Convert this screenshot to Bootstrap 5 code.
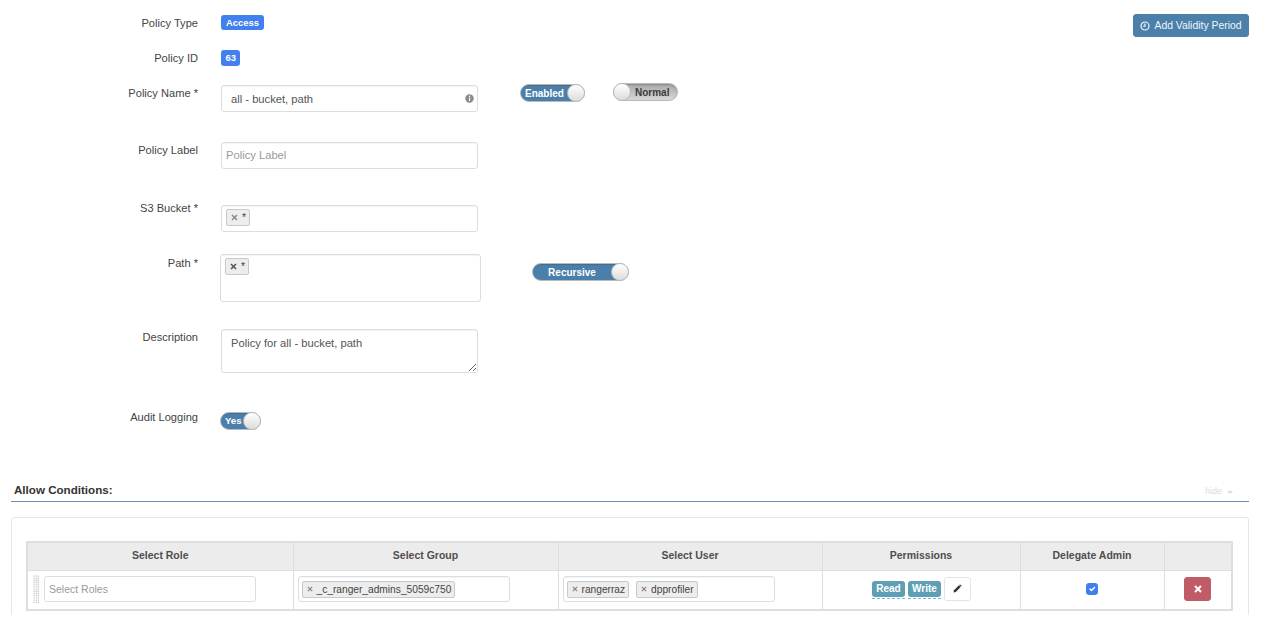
<!DOCTYPE html>
<html lang="en">
<head>
<meta charset="utf-8">
<title>Policy</title>
<link rel="stylesheet" href="https://cdn.jsdelivr.net/npm/bootstrap@5.3.0/dist/css/bootstrap.min.css">
<style>
html,body{background:#fff;margin:0}
body{font-family:"Liberation Sans",Arial,sans-serif;font-size:11px;color:#444;height:630px;overflow:hidden}
.page-wrap{height:615px;overflow:hidden;padding:15px 13px 0 11px}
.frm-row{display:flex;gap:23px;align-items:flex-start}
.frm-label{width:187px;flex:none;text-align:right;line-height:15px;color:#444;font-size:11.1px;padding-top:1px}
.r1{height:35px}
.r2{height:35px}
.r3{height:57px}
.r4{height:58px}
.r5{height:54px}
.r5 .tag-box{margin-top:5px}
.r6{height:75px}
.r6 .frm-label{padding-top:2px}
.r7{height:80px}
.r8{height:68px}
.pill-badge{background:#4180ee;color:#fff;font-size:9.4px;font-weight:700;line-height:15px;padding:0 5px;border-radius:3px;display:block}
.pill-id{line-height:16px;padding:0 4.5px}
.valid-btn{--bs-btn-padding-y:0;--bs-btn-padding-x:0;--bs-btn-font-size:10.4px;--bs-btn-bg:#4a80a9;--bs-btn-border-color:#4a80a9;--bs-btn-color:#f2f6fa;height:23px;width:116px;margin-left:auto;margin-top:-1px;padding-top:1px;border-radius:3px;display:flex;align-items:center;justify-content:center;gap:4px}
.txt-ctl,.tag-box,.note-ctl{width:257px;height:27px;border:1px solid #d9dee3;border-radius:3px;font-size:11.2px;color:#555;padding:0 9px;box-shadow:inset 0 1px 1px rgba(0,0,0,.04);background:#fff;line-height:normal}
.input-host{position:relative;flex:none}
.input-host svg{position:absolute;right:4px;top:9px}
.txt-ctl::placeholder,.cell-input::placeholder{color:#9a9a9a;opacity:1}
.label-ctl{padding:0 4px 2px}
.tag-box{display:flex;align-items:flex-start;gap:7px;padding:3px 3px 3px 4px}
.tag-path{width:261px;height:48px;margin-left:-1px}
.note-ctl{height:44px;padding:7px 9px 0;resize:both;flex:none}
.sel-tag{display:inline-flex;align-items:center;gap:4px;height:17px;padding:0 3px 0 4px;background:#ededed;border:1px solid #c9c9c9;border-radius:2px;color:#444;font-size:10.2px;line-height:15px;white-space:nowrap}
.sel-tag svg{flex:none}
.star-tag{padding:0 4px;width:24px;height:17px;font-size:10.5px}
.swt{display:flex;align-items:center;height:18px;border-radius:9px;border:1px solid #b9b9b9;background:#4a7fab;color:#fff;font-size:10px;font-weight:700;position:relative;flex:none;box-shadow:inset 0 1px 1px rgba(0,0,0,.15)}
.swt::after{content:"";position:absolute;top:-1px;right:-1px;width:18px;height:18px;border-radius:50%;background:linear-gradient(#fff,#dcdcdc);border:1px solid #bbb}
.swt-enabled{width:65px;padding-left:4px;margin-left:19px;margin-top:-1px}
.swt-normal{width:65px;padding-left:21px;margin-left:5px;margin-top:-2px;background:linear-gradient(#a8a8a8,#d8d8d8);color:#3c3c3c;box-shadow:inset 0 1px 2px rgba(0,0,0,.2)}
.swt-normal::after{right:auto;left:-1px}
.swt-rec{width:97px;justify-content:center;padding-right:17px;margin-left:28px;margin-top:9px}
.swt-yes{width:41px;padding-left:4px;margin-left:-1px;margin-top:3px;font-size:9.6px}
.sect-head{display:flex;align-items:flex-start;height:25px;border-bottom:1px solid #6b8fae;font-size:11.6px;color:#333;padding:4px 3px 0;font-weight:700}
.hide-link{margin-left:auto;margin-right:13px;font-size:9px;font-weight:400;color:#dcdcdc;padding-top:4px;display:flex;align-items:center;gap:5px}
.hide-caret{width:0;height:0;border-left:3px solid transparent;border-right:3px solid transparent;border-bottom:3px solid #dcdcdc}
.cond-card{margin-top:15px;border:1px solid #e6e6e6;border-radius:3px;padding:23px 16px 30px 14px;height:140px}
.cond-table{table-layout:fixed;width:1205px;margin:0;border:2px solid #dedede;border-collapse:collapse;--bs-table-border-color:#e6e6e6}
.cond-table th{height:28px;padding:0;background:#ececec;text-align:center;vertical-align:middle;font-size:10.5px;color:#4f4f4f;font-weight:700;box-shadow:none;border-bottom-width:0}
.cond-table td{height:38px;padding:0 0 2px;vertical-align:middle;text-align:center;box-shadow:none}
.cell-flex{display:flex;align-items:center;height:36px}
.drag-dots{width:6px;height:28px;margin-left:5px;margin-right:5px;background-image:radial-gradient(#cfcfcf .7px,transparent .8px);background-size:2.2px 2.2px;flex:none}
.cell-input{width:212px;height:26px;border:1px solid #d9dee3;border-radius:3px;font-size:10.5px;padding:0 4px;box-shadow:none;flex:none;color:#555}
.group-box{width:212px;height:26px;padding:4px 3px;gap:7px;margin-left:4px}
.perm-wrap{display:flex;align-items:center;justify-content:center;gap:3px;padding-left:1px}
.perm-tag{background:#5f9fb6;color:#fff;font-size:10px;font-weight:700;line-height:16px;height:16px;width:33px;text-align:center;border-radius:3px;position:relative}
.perm-tag::after{content:"";position:absolute;left:0;right:0;bottom:-2px;border-bottom:1px dashed #7fb3cf}
.pen-btn{--bs-btn-padding-x:0;--bs-btn-padding-y:0;--bs-btn-border-color:#e4e4e4;--bs-btn-bg:#fff;width:27px;height:24px;display:flex;align-items:center;justify-content:center;border-radius:3px}
.chk-box{width:12px;height:12px;margin:3px 0 0;border-radius:2px;float:none}
.chk-box:checked{background-color:#3f7ff0;border-color:#3f7ff0}
.del-btn{--bs-btn-padding-x:0;--bs-btn-padding-y:0;--bs-btn-bg:#bf5c65;--bs-btn-border-color:#bf5c65;width:27px;height:24px;border-radius:3px;display:inline-flex;align-items:center;justify-content:center}
</style>
</head>
<body>
<div class="page-wrap">
  <div class="frm-row r1">
    <div class="frm-label">Policy Type</div>
    <span class="pill-badge">Access</span>
    <button type="button" class="btn btn-primary valid-btn">
      <svg width="10" height="10" viewBox="0 0 10 10" fill="none" stroke="#f2f6fa" stroke-width="1.2"><circle cx="5" cy="5" r="4"/><path d="M5 2.6V5.2H3.2"/></svg>
      Add Validity Period
    </button>
  </div>
  <div class="frm-row r2">
    <div class="frm-label">Policy ID</div>
    <span class="pill-badge pill-id">63</span>
  </div>
  <div class="frm-row r3">
    <div class="frm-label">Policy Name *</div>
    <div class="input-host">
      <input class="form-control txt-ctl" value="all - bucket, path">
      <svg width="9" height="9" viewBox="0 0 9 9"><circle cx="4.5" cy="4.5" r="4.2" fill="#8a8a8a"/><rect x="3.9" y="3.6" width="1.3" height="3.4" fill="#fff"/><rect x="3.9" y="1.7" width="1.3" height="1.2" fill="#fff"/></svg>
    </div>
    <div class="swt swt-enabled">Enabled</div>
    <div class="swt swt-normal">Normal</div>
  </div>
  <div class="frm-row r4">
    <div class="frm-label">Policy Label</div>
    <input class="form-control txt-ctl label-ctl" placeholder="Policy Label">
  </div>
  <div class="frm-row r5">
    <div class="frm-label">S3 Bucket *</div>
    <div class="tag-box">
      <span class="sel-tag star-tag"><svg width="7" height="7" viewBox="0 0 7 7" stroke="#8a8a8a" stroke-width="1.5"><path d="M1 1L6 6M6 1L1 6"/></svg>*</span>
    </div>
  </div>
  <div class="frm-row r6">
    <div class="frm-label">Path *</div>
    <div class="tag-box tag-path">
      <span class="sel-tag star-tag"><svg width="7" height="7" viewBox="0 0 7 7" stroke="#555" stroke-width="1.6"><path d="M1 1L6 6M6 1L1 6"/></svg>*</span>
    </div>
    <div class="swt swt-rec">Recursive</div>
  </div>
  <div class="frm-row r7">
    <div class="frm-label">Description</div>
    <textarea class="form-control note-ctl">Policy for all - bucket, path</textarea>
  </div>
  <div class="frm-row r8">
    <div class="frm-label">Audit Logging</div>
    <div class="swt swt-yes">Yes</div>
  </div>
  <div class="sect-head">
    <span>Allow Conditions:</span>
    <span class="hide-link">hide <i class="hide-caret"></i></span>
  </div>
  <div class="cond-card">
    <table class="table table-bordered cond-table">
      <colgroup><col style="width:266px"><col style="width:265px"><col style="width:264px"><col style="width:198px"><col style="width:144px"><col style="width:68px"></colgroup>
      <thead>
        <tr><th>Select Role</th><th>Select Group</th><th>Select User</th><th>Permissions</th><th>Delegate Admin</th><th></th></tr>
      </thead>
      <tbody>
        <tr>
          <td><div class="cell-flex"><span class="drag-dots"></span><input class="form-control cell-input" placeholder="Select Roles"></div></td>
          <td><div class="cell-flex"><div class="tag-box group-box">
            <span class="sel-tag"><svg width="6" height="6" viewBox="0 0 7 7" stroke="#888" stroke-width="1.5"><path d="M1 1L6 6M6 1L1 6"/></svg>_c_ranger_admins_5059c750</span>
          </div></div></td>
          <td><div class="cell-flex"><div class="tag-box group-box">
            <span class="sel-tag"><svg width="6" height="6" viewBox="0 0 7 7" stroke="#888" stroke-width="1.5"><path d="M1 1L6 6M6 1L1 6"/></svg>rangerraz</span>
            <span class="sel-tag"><svg width="6" height="6" viewBox="0 0 7 7" stroke="#888" stroke-width="1.5"><path d="M1 1L6 6M6 1L1 6"/></svg>dpprofiler</span>
          </div></div></td>
          <td><div class="perm-wrap">
            <span class="perm-tag">Read</span><span class="perm-tag">Write</span>
            <button type="button" class="btn pen-btn"><svg width="9" height="9" viewBox="0 0 9 9" fill="#333"><path d="M0.6 8.4L1 6.2L5.9 1.3L7.7 3.1L2.8 8Z"/><path d="M6.5 0.7Q7 0.2 7.5 0.7L8.3 1.5Q8.8 2 8.3 2.5L8.1 2.7L6.3 0.9Z"/></svg></button>
          </div></td>
          <td><input class="form-check-input chk-box" type="checkbox" checked></td>
          <td><button type="button" class="btn del-btn"><svg width="8" height="8" viewBox="0 0 8 8" stroke="#fff" stroke-width="2"><path d="M1 1L7 7M7 1L1 7"/></svg></button></td>
        </tr>
      </tbody>
    </table>
  </div>
</div>
<script src="https://cdn.jsdelivr.net/npm/bootstrap@5.3.0/dist/js/bootstrap.bundle.min.js"></script>
</body>
</html>
